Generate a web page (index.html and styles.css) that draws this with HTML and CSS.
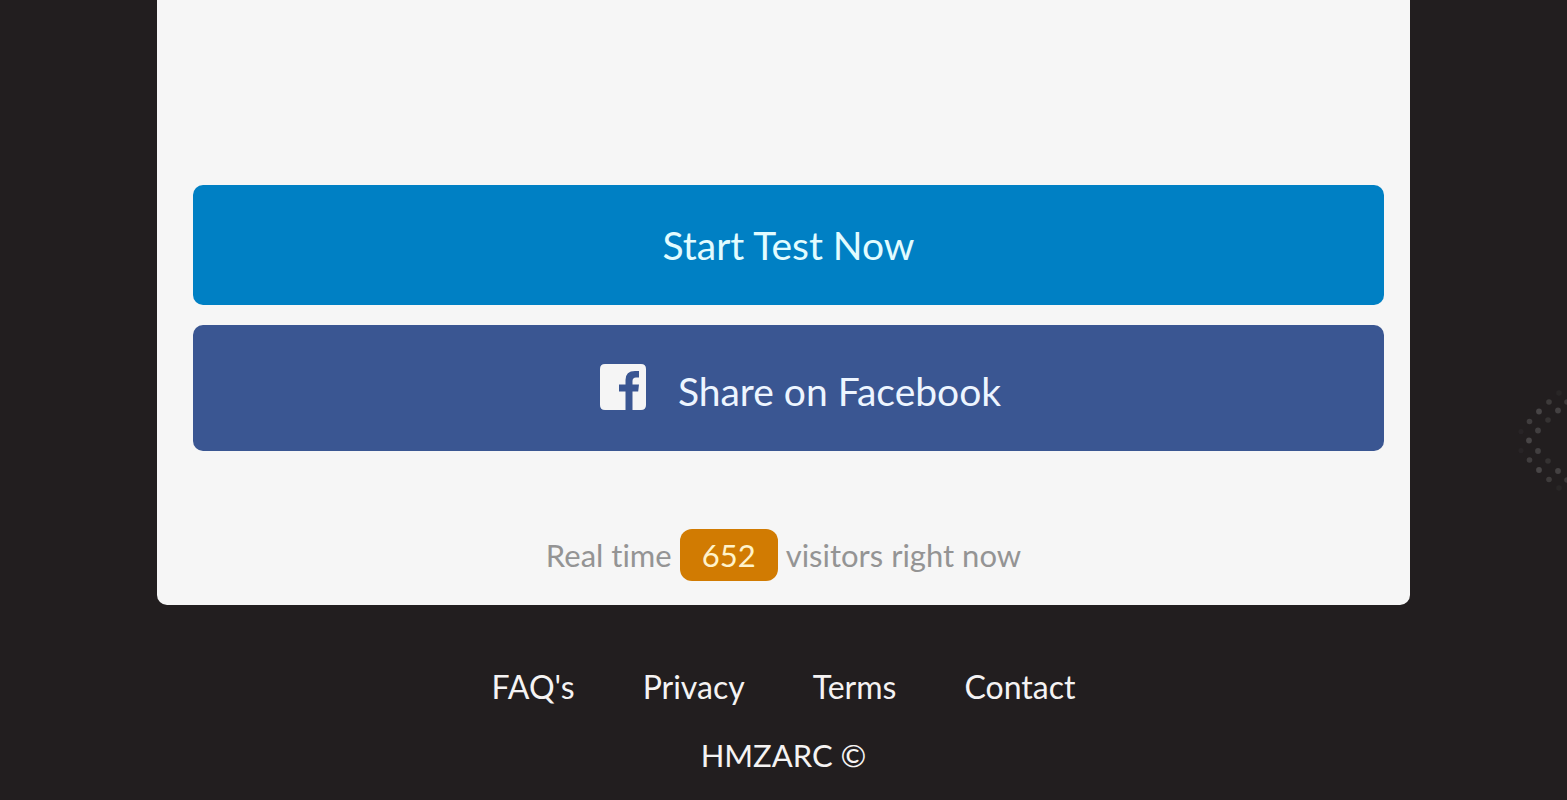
FILE: index.html
```html
<!DOCTYPE html>
<html lang="en">
<head>
<meta charset="utf-8">
<meta name="viewport" content="width=device-width, initial-scale=1">
<title>HMZARC</title>
<link rel="stylesheet" href="styles.css">
</head>
<body>
<main class="card">
  <div class="actions">
    <button class="button button-start" type="button">Start Test Now</button>
    <button class="button button-share" type="button">
      <svg class="facebook-icon" viewBox="0 0 46 46" aria-hidden="true">
        <path fill="#f5f5f5" d="M5 0H41Q46 0 46 5V41Q46 46 41 46H32.5V27.5H38.2L39 20.5H32.5V17Q32.5 13.5 36 13.5H39V7H35Q25.5 7 25.5 16V20.5H19V27.5H25.5V46H5Q0 46 0 41V5Q0 0 5 0Z"/>
      </svg>
      <span>Share on Facebook</span>
    </button>
  </div>
  <p class="visitors">Real time <span class="badge">652</span> visitors right now</p>
</main>
<footer class="footer">
  <nav class="links">
    <a href="#faq">FAQ's</a>
    <a href="#privacy">Privacy</a>
    <a href="#terms">Terms</a>
    <a href="#contact">Contact</a>
  </nav>
  <p class="copyright">HMZARC ©</p>
</footer>
<svg class="dots" viewBox="0 0 52 112" aria-hidden="true">
  <g fill="#484546">
    <circle cx="34" cy="17" r="2.8" opacity=".75"/>
    <circle cx="24" cy="26.5" r="2.9"/>
    <circle cx="43" cy="25.5" r="2.9" opacity=".9"/>
    <circle cx="52" cy="17" r="2.8" opacity=".7"/>
    <circle cx="14.5" cy="36.5" r="2.8" opacity=".8"/>
    <circle cx="33" cy="35" r="2.8" opacity=".5"/>
    <circle cx="23" cy="45.5" r="2.9" opacity=".85"/>
    <circle cx="14" cy="55.5" r="2.9"/>
    <circle cx="23" cy="66" r="2.9" opacity=".85"/>
    <circle cx="14.5" cy="75" r="2.8" opacity=".8"/>
    <circle cx="33" cy="76" r="2.8" opacity=".5"/>
    <circle cx="24" cy="85" r="2.9"/>
    <circle cx="43" cy="86" r="2.9" opacity=".9"/>
    <circle cx="34" cy="94.5" r="2.8" opacity=".75"/>
    <circle cx="52" cy="95" r="2.8" opacity=".7"/>
    <circle cx="44" cy="8" r="2.8" opacity=".2"/>
    <circle cx="44" cy="103" r="2.8" opacity=".2"/>
    <circle cx="6" cy="46.5" r="2.6" opacity=".18"/>
    <circle cx="6" cy="65.5" r="2.6" opacity=".18"/>
  </g>
</svg>
</body>
</html>
```
FILE: styles.css
```css
* {
  box-sizing: border-box;
}

body {
  margin: 0;
  background: #221e1f;
  font-family: Lato, "Open Sans", sans-serif;
  font-size: 31px;
  line-height: 40px;
  font-variant-ligatures: none;
}

p {
  margin: 0;
}

.card {
  width: 80%;
  margin: 0 auto;
  padding: 185px 26px 24px 36px;
  border-radius: 0 0 10px 10px;
  background: #f6f6f6;
}

.actions {
  display: grid;
  gap: 20px;
}

.button {
  display: flex;
  align-items: center;
  justify-content: center;
  gap: 32px;
  width: 100%;
  padding: 36px 24px;
  border: 0;
  border-radius: 10px;
  font: inherit;
  font-size: 39px;
  line-height: 48px;
  cursor: pointer;
}

.button-start {
  background: #0080c4;
  color: #e2fcff;
}

.button-share {
  align-items: flex-start;
  padding: 39px 0 33px 24px;
  background: #3a5692;
  color: #edf5ff;
  line-height: 54px;
}

.facebook-icon {
  width: 46px;
  height: 46px;
}

.visitors {
  display: flex;
  flex-wrap: wrap;
  align-items: center;
  justify-content: center;
  gap: 8px;
  margin-top: 78px;
  padding-right: 10px;
  color: #949494;
}

.badge {
  padding: 6px 22px;
  border-radius: 12px;
  background: #d17b02;
  color: #fff3cb;
}

.footer {
  display: grid;
  gap: 28px;
  padding: 62px 24px 24px;
  color: #f5f3f3;
  text-align: center;
}

.links {
  display: flex;
  flex-wrap: wrap;
  justify-content: center;
  gap: 16px 68px;
  font-size: 32px;
}

.links a {
  color: inherit;
  text-decoration: none;
}

.dots {
  position: absolute;
  top: 385px;
  right: 0;
  width: 52px;
  height: 112px;
}
```
